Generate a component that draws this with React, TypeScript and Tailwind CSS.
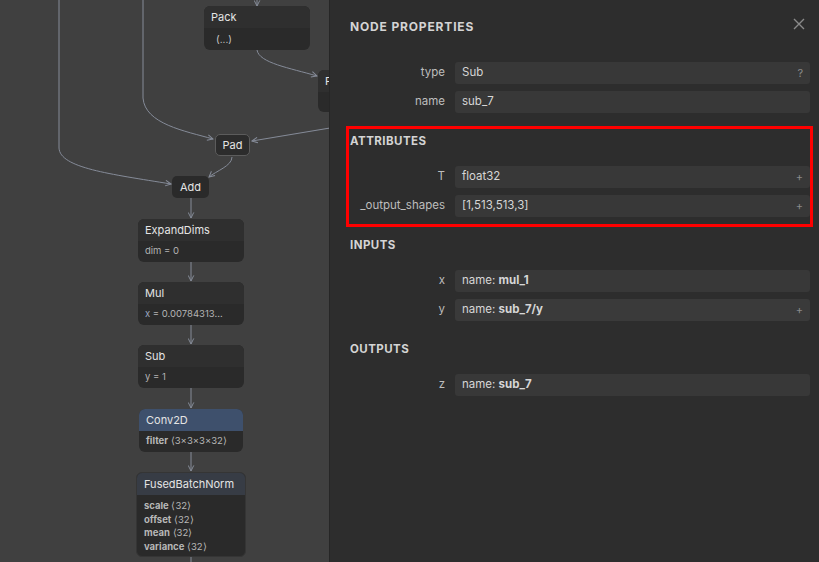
import React from "react";

const font = { fontFamily: "Inter, 'Liberation Sans', sans-serif" };

function Node({
  left,
  top,
  width,
  title,
  header = "bg-[#2f2f2f]",
  children,
  extra = "",
}: {
  left: number;
  top: number;
  width: number;
  title: string;
  header?: string;
  children?: React.ReactNode;
  extra?: string;
}) {
  return (
    <div
      className={`absolute rounded-[6px] bg-[#2a2a2a] overflow-hidden ${extra}`}
      style={{ left, top, width }}
    >
      <div className={`h-[22px] flex items-center px-[7px] pt-[1px] text-[11px] text-[#e4e4e4] ${header}`}>
        {title}
      </div>
      {children}
    </div>
  );
}

function Row({ label, children, right, dotted = false }: { label: string; children: React.ReactNode; right?: string; dotted?: boolean }) {
  return (
    <div className="flex items-center h-[22px]">
      <div className="w-[95px] text-right text-[11.5px] text-[#bdbdbd]">{label}</div>
      <div
        className={`ml-[10px] flex-1 h-[22px] rounded-[3px] flex items-center pl-[7px] pr-[7px] text-[11.5px] text-[#d6d6d6] ${
          dotted ? "bg-[#3a3a3a]" : "bg-[#383838]"
        }`}
      >
        <div className="flex-1">{children}</div>
        {right && <span className="text-[11px] text-[#8a8a8a]">{right}</span>}
      </div>
    </div>
  );
}

function Title({ children, mt }: { children: React.ReactNode; mt: string }) {
  return (
    <div className={`h-[22px] flex items-center pt-[3px] text-[11.5px] font-bold tracking-[0.04em] text-[#d4d4d4] ${mt}`}>
      {children}
    </div>
  );
}

export default function App() {
  const edge = "#858b98";
  return (
    <div className="flex w-[819px] h-[562px] overflow-hidden" style={font}>
      {/* Graph canvas */}
      <div className="relative w-[329px] h-[562px] bg-[#404040] overflow-hidden shrink-0">
        <svg className="absolute inset-0" width="329" height="562">
          <defs>
            <marker id="arr" viewBox="0 0 10 10" refX="9" refY="5" markerWidth="7" markerHeight="7" orient="auto-start-reverse" markerUnits="userSpaceOnUse">
              <path d="M1 1 L9 5 L1 9" fill="none" stroke={edge} strokeWidth="1.4" />
            </marker>
          </defs>
          <g fill="none" stroke={edge} strokeWidth="1">
            <path d="M59 0 V148 C60 168 110 174 171 184" markerEnd="url(#arr)" />
            <path d="M143 0 V98 C145 124 185 131 213 139" markerEnd="url(#arr)" />
            <path d="M257 0 V6" markerEnd="url(#arr)" />
            <path d="M257 50 C259 63 290 68 317 76" markerEnd="url(#arr)" />
            <path d="M330 128 L252 141" markerEnd="url(#arr)" />
            <path d="M232 157 C232 166 216 171 209 177" markerEnd="url(#arr)" />
            <path d="M191 198 V218" markerEnd="url(#arr)" />
            <path d="M191 262 V281" markerEnd="url(#arr)" />
            <path d="M191 325 V344" markerEnd="url(#arr)" />
            <path d="M191 388 V408" markerEnd="url(#arr)" />
            <path d="M191 452 V471" markerEnd="url(#arr)" />
            <path d="M191 555 V562" />
          </g>
        </svg>

        <Node left={204} top={6} width={106} title="Pack">
          <div className="h-[22px] flex items-center pl-[12px] pt-[1px] text-[10px] text-[#c8c8c8]">(...)</div>
        </Node>

        <Node left={318} top={70} width={100} title="F">
          <div className="h-[20px]" />
        </Node>

        <div className="absolute left-[215px] top-[134px] w-[35px] h-[22px] rounded-[5px] bg-[#2c2c2c] border border-[#5c5c5c] flex items-center justify-center text-[11px] text-[#e4e4e4]">
          Pad
        </div>

        <div className="absolute left-[172px] top-[176px] w-[37px] h-[22px] rounded-[5px] bg-[#2a2a2a] flex items-center justify-center text-[11px] text-[#e4e4e4]">
          Add
        </div>

        <Node left={138} top={219} width={106} title="ExpandDims">
          <div className="h-[21px] flex items-center px-[7px] text-[9.5px] text-[#b4b4b4]">dim = 0</div>
        </Node>

        <Node left={138} top={282} width={106} title="Mul">
          <div className="h-[21px] flex items-center px-[7px] text-[9.5px] text-[#b4b4b4]">
            <span className="text-[#9aa7c0]">x</span>&nbsp;= 0.00784313...
          </div>
        </Node>

        <Node left={138} top={345} width={106} title="Sub">
          <div className="h-[21px] flex items-center px-[7px] text-[9.5px] text-[#b4b4b4]">y = 1</div>
        </Node>

        <Node left={139} top={409} width={104} title="Conv2D" header="bg-[#3e506c]">
          <div className="h-[21px] flex items-center px-[7px] text-[9.5px] text-[#b8b8b8]">
            <span className="font-bold">filter</span>&nbsp;⟨3×3×3×32⟩
          </div>
        </Node>

        <Node left={136} top={472} width={110} title="FusedBatchNorm" header="bg-[#373c45]" extra="border border-[#353535]">
          <div className="px-[7px] pt-[4px] pb-[2px] text-[9.5px] leading-[13.7px] text-[#b8b8b8]">
            <div><span className="font-bold">scale</span> ⟨32⟩</div>
            <div><span className="font-bold">offset</span> ⟨32⟩</div>
            <div><span className="font-bold">mean</span> ⟨32⟩</div>
            <div><span className="font-bold">variance</span> ⟨32⟩</div>
          </div>
        </Node>
      </div>

      {/* Properties panel */}
      <div className="flex-1 h-[562px] bg-[#2d2d2d] border-l border-[#262626] pl-[20px] pr-[9px]">
        <div className="h-[52px] flex items-center justify-between pt-[2px]">
          <div className="text-[12px] font-bold tracking-[0.07em] text-[#d4d4d4]">NODE PROPERTIES</div>
          <svg width="12" height="12" viewBox="0 0 12 12" className="mr-[5px] -mt-[6px]">
            <path d="M1 1 L11 11 M11 1 L1 11" stroke="#8a8a8a" strokeWidth="1.4" />
          </svg>
        </div>

        <div className="mt-[10px] flex flex-col gap-[7px]">
          <Row label="type" right="?">Sub</Row>
          <Row label="name">sub_7</Row>
        </div>

        <div className="mt-[13px] -ml-[4px] -mr-[3px] border-[3px] border-[#ff0000] pl-[1px] pb-[7px]">
          <Title mt="mt-0">ATTRIBUTES</Title>
          <div className="mt-[15px] flex flex-col gap-[7px]">
            <Row label="T" right="+">float32</Row>
            <Row label="_output_shapes" right="+">[1,513,513,3]</Row>
          </div>
        </div>

        <Title mt="mt-[6px]">INPUTS</Title>
        <div className="mt-[15px] flex flex-col gap-[7px]">
          <Row label="x">
            name: <span className="font-bold">mul_1</span>
          </Row>
          <Row label="y" right="+" dotted>
            name: <span className="font-bold">sub_7/y</span>
          </Row>
        </div>

        <Title mt="mt-[16px]">OUTPUTS</Title>
        <div className="mt-[15px] flex flex-col gap-[7px]">
          <Row label="z">
            name: <span className="font-bold">sub_7</span>
          </Row>
        </div>
      </div>
    </div>
  );
}
